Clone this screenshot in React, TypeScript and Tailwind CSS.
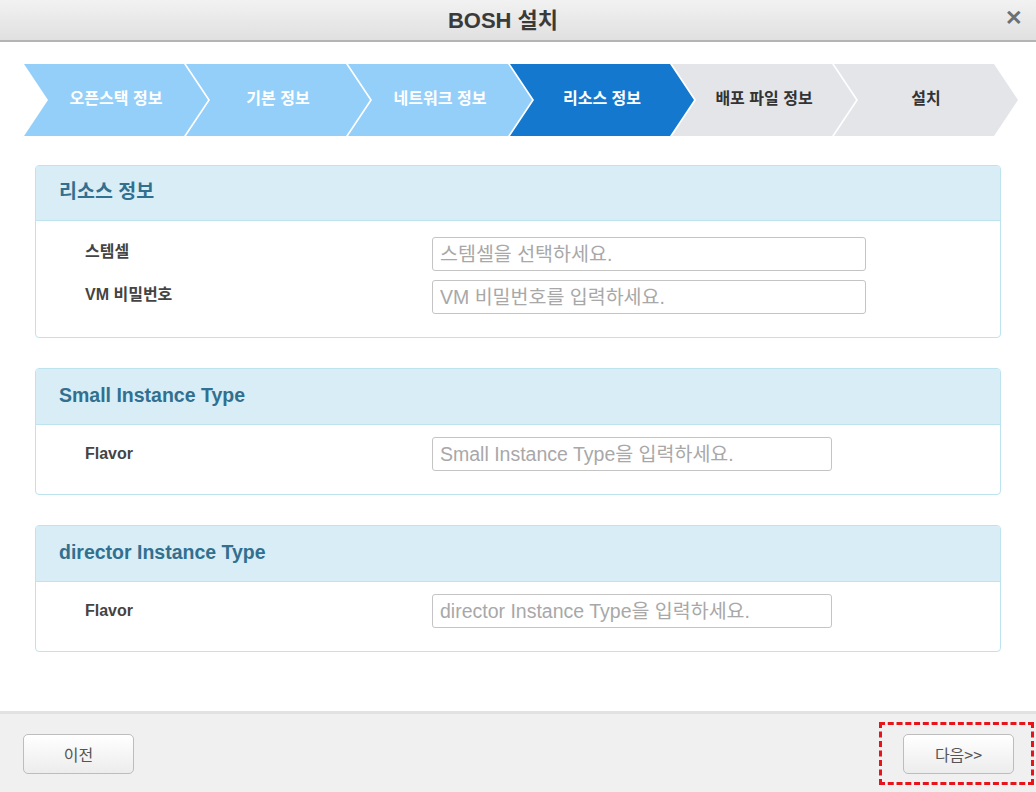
import React from "react";

const steps = [
  { label: "오픈스택 정보", state: "done" },
  { label: "기본 정보", state: "done" },
  { label: "네트워크 정보", state: "done" },
  { label: "리소스 정보", state: "active" },
  { label: "배포 파일 정보", state: "todo" },
  { label: "설치", state: "todo" },
];

const FONT = { fontFamily: '"Liberation Sans", "Noto Sans CJK KR", sans-serif' };

function Row({ label, placeholder, w, shift }: { label: string; placeholder: string; w: string; shift: string }) {
  return (
    <div className="flex items-center">
      <div className={`w-[396px] pl-[49px] text-[16px] font-bold text-[#444] ${shift}`}>{label}</div>
      <input
        className={`${w} h-[34px] rounded-[3px] border border-[#c4c4c4] bg-white px-[7px] text-[19.5px] text-[#333] placeholder:text-[#a8a8a8] outline-none`}
        placeholder={placeholder}
      />
    </div>
  );
}

function Panel({ title, children, bodyClass, headH }: { title: string; children: React.ReactNode; bodyClass: string; headH: string }) {
  return (
    <div className="mx-[35px] w-[966px] rounded-[4px] border border-[#bde3ef] bg-white overflow-hidden">
      <div className={`${headH} flex items-center pl-[23px] bg-[#d9edf7] border-b border-[#bde3ef] text-[19.5px] font-bold text-[#31708f]`}>
        <span className="-mt-[2px]">{title}</span>
      </div>
      <div className={bodyClass}>{children}</div>
    </div>
  );
}

export default function App() {
  return (
    <div className="relative w-[1036px] h-[792px] flex flex-col bg-white overflow-hidden" style={FONT}>
      {/* Title bar */}
      <div className="relative h-[42px] shrink-0 flex items-center justify-center pr-[30px] bg-gradient-to-b from-[#f2f2f2] to-[#e0e0e0] border-b-2 border-[#b4b4b4]">
        <span className="text-[22px] font-bold text-[#3a3a3a]">BOSH 설치</span>
        <span className="absolute right-[13px] top-[7px] text-[21px] font-bold text-[#6b7075] leading-none">✕</span>
      </div>

      {/* Content */}
      <div className="flex-1 flex flex-col">
        {/* Steps */}
        <div className="mt-[22px] ml-[24px] flex h-[72px]">
          {steps.map((s, i) => {
            const bg =
              s.state === "done" ? "bg-[#94cffa]" : s.state === "active" ? "bg-[#1578cf]" : "bg-[#e3e5e9]";
            const tc = s.state === "todo" ? "text-[#333]" : "text-white";
            return (
              <div
                key={s.label}
                className={`relative w-[184px] h-[72px] flex items-center justify-center ${bg} ${tc} text-[16px] font-bold ${i > 0 ? "-ml-[22px]" : ""}`}
                style={{
                  clipPath:
                    "polygon(0 0, calc(100% - 24px) 0, 100% 50%, calc(100% - 24px) 100%, 0 100%, 24px 50%)",
                }}
              >
                <span className="-mt-[2px]">{s.label}</span>
              </div>
            );
          })}
        </div>

        <div className="mt-[29px] flex flex-col gap-[30px]">
          <Panel title="리소스 정보" headH="h-[55px]" bodyClass="pt-[16px] pb-[23px] flex flex-col gap-[9px]">
            <Row label="스템셀" placeholder="스템셀을 선택하세요." w="w-[434px]" shift="-mt-[4px]" />
            <Row label="VM 비밀번호" placeholder="VM 비밀번호를 입력하세요." w="w-[434px]" shift="-mt-[4px]" />
          </Panel>
          <Panel title="Small Instance Type" headH="h-[56px]" bodyClass="pt-[12px] pb-[23px]">
            <Row label="Flavor" placeholder="Small Instance Type을 입력하세요." w="w-[400px]" shift="mt-0" />
          </Panel>
          <Panel title="director Instance Type" headH="h-[56px]" bodyClass="pt-[12px] pb-[23px]">
            <Row label="Flavor" placeholder="director Instance Type을 입력하세요." w="w-[400px]" shift="mt-0" />
          </Panel>
        </div>
      </div>

      {/* Footer */}
      <div className="h-[81px] shrink-0 border-t-[3px] border-[#e2e2e2] bg-[#f0f0f0] flex items-center justify-between px-[23px] pt-[2px]">
        <button className="w-[111px] h-[40px] rounded-[5px] border border-[#bdbdbd] bg-gradient-to-b from-white to-[#ececec] text-[16px] text-[#555]" style={{ fontFamily: '"Noto Sans CJK KR", sans-serif' }}>
          이전
        </button>
        <button className="mr-[-1px] w-[111px] h-[40px] rounded-[5px] border border-[#bdbdbd] bg-gradient-to-b from-white to-[#ececec] text-[16px] text-[#555]" style={{ fontFamily: '"Noto Sans CJK KR", sans-serif' }}>
          다음&gt;&gt;
        </button>
      </div>

      {/* Annotation overlay */}
      <div className="absolute left-[879px] top-[722px] w-[155px] h-[63px] border-[3px] border-dashed border-[#e8141b]" />
    </div>
  );
}
